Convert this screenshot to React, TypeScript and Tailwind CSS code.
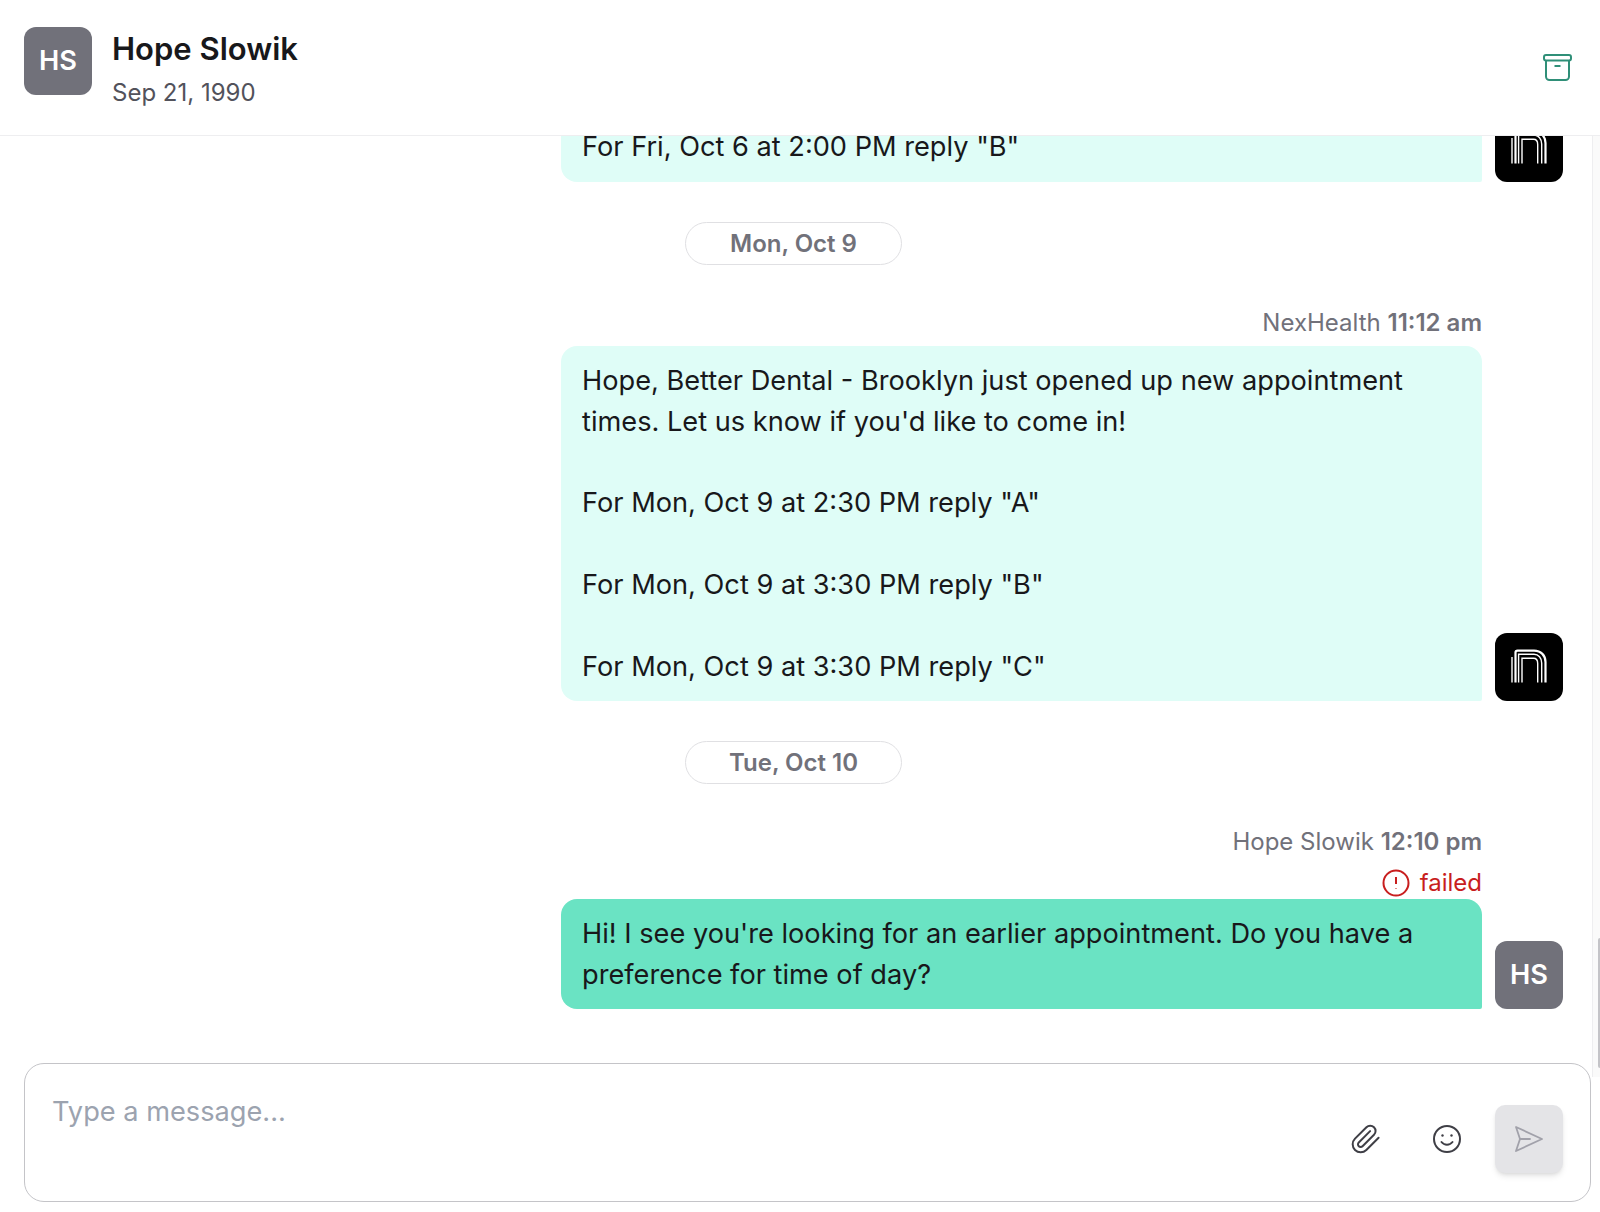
const font = { fontFamily: "Inter, 'Liberation Sans', sans-serif" };

function Avatar({ children }: { children: React.ReactNode }) {
  return (
    <div className="w-[68px] h-[68px] shrink-0 rounded-[12px] bg-[#71717a] text-white flex items-center justify-center text-[27.2px] font-semibold">
      {children}
    </div>
  );
}

function Logo() {
  return (
    <div className="w-[68px] h-[68px] shrink-0 rounded-[12px] bg-black flex items-center justify-center">
      <svg width="36" height="36" viewBox="0 0 36 36" fill="none" stroke="#fff" strokeWidth="1.4">
        <path d="M1 33.5V8" />
        <path d="M4.5 33.5V3.5Q4.5 1.6 6.5 1.6H23C30 1.6 34.5 6.5 34.5 13V33.5" strokeWidth="2.2" />
        <path d="M7.6 33.5V5.2H23C27.5 5.2 30.7 9 30.7 14V33.5" />
        <path d="M11 33.5V9.3H22.5C25 9.3 26.7 11.5 26.7 14.5V33.5" />
      </svg>
    </div>
  );
}

function DatePill({ children }: { children: React.ReactNode }) {
  return (
    <div className="pl-[685px] mt-[40px] mb-[40px]">
      <div className="w-[217px] h-[43px] rounded-full border border-[#e0e0e3] flex items-center justify-center text-[24px] font-semibold text-[#71717a]">
        {children}
      </div>
    </div>
  );
}

function Row({ bubble, avatar, children }: { bubble: string; avatar: React.ReactNode; children: React.ReactNode }) {
  return (
    <div className="flex items-end pl-[561px] pr-[37px] gap-[13px]">
      <div className={`w-[921px] rounded-tl-[16px] rounded-tr-[16px] rounded-bl-[16px] rounded-br-[2px] px-[21px] pt-[15px] text-[27.2px] leading-[40.8px] text-[#18181b] whitespace-pre-line ${bubble}`}>
        {children}
      </div>
      {avatar}
    </div>
  );
}

export default function App() {
  return (
    <div style={font} className="relative w-[1600px] h-[1212px] bg-white flex flex-col overflow-hidden">
      <header className="relative z-10 h-[136px] shrink-0 border-b border-[#eeeef0] flex items-start pl-[24px] pr-[28px] pt-[27px] bg-white">
        <Avatar>HS</Avatar>
        <div className="ml-[20px]">
          <div className="text-[31px] leading-[44px] font-semibold text-[#18181b]">Hope Slowik</div>
          <div className="text-[24px] leading-[36px] mt-[4px] text-[#52525b]">Sep 21, 1990</div>
        </div>
        <svg className="ml-auto mt-[27px]" width="29" height="27" viewBox="0 0 29 27" fill="none" stroke="#2f8f78" strokeWidth="2" strokeLinejoin="round">
          <rect x="1" y="1" width="27" height="5.5" rx="2" />
          <path d="M3 6.5V22.5a3.5 3.5 0 0 0 3.5 3.5H22.5a3.5 3.5 0 0 0 3.5-3.5V6.5" />
          <path d="M11.5 12H17.5" />
        </svg>
      </header>

      <main className="flex-1 min-h-0 overflow-hidden flex flex-col justify-end pb-[54px]">
        <div className="shrink-0 w-[1600px]">
          <Row bubble="bg-[#dffdf7] pb-[14px]" avatar={<Logo />}>{'For Fri, Oct 6 at 2:00 PM reply "B"'}</Row>
          <DatePill>Mon, Oct 9</DatePill>
          <div className="text-right pr-[118px] text-[24px] leading-[36px] text-[#71717a] mb-[5px]">
            NexHealth <span className="font-semibold">11:12 am</span>
          </div>
          <Row bubble="bg-[#dffdf7] pb-[14px]" avatar={<Logo />}>
            {'Hope, Better Dental - Brooklyn just opened up new appointment\ntimes. Let us know if you\'d like to come in!\n\nFor Mon, Oct 9 at 2:30 PM reply "A"\n\nFor Mon, Oct 9 at 3:30 PM reply "B"\n\nFor Mon, Oct 9 at 3:30 PM reply "C"'}
          </Row>
          <DatePill>Tue, Oct 10</DatePill>
          <div className="text-right pr-[118px] text-[24px] leading-[36px] text-[#71717a]">
            Hope Slowik <span className="font-semibold">12:10 pm</span>
          </div>
          <div className="flex justify-end items-center gap-[10px] pr-[118px] text-[24px] leading-[32px] text-[#c81e1e] mt-[7px]">
            <svg width="28" height="28" viewBox="0 0 28 28" fill="none" stroke="#c81e1e" strokeWidth="2">
              <circle cx="14" cy="14" r="12.5" />
              <path d="M14 8V15" />
              <path d="M14 19V19.5" />
            </svg>
            failed
          </div>
          <Row bubble="bg-[#6ae3c3] pb-[13px]" avatar={<Avatar>HS</Avatar>}>
            {"Hi! I see you're looking for an earlier appointment. Do you have a\npreference for time of day?"}
          </Row>
        </div>
      </main>

      <div className="shrink-0 h-[149px] pl-[24px] pr-[9px]">
        <div className="h-[139px] rounded-[20px] border border-[#c4c4c8] flex items-start pl-[27px] pr-[27px]">
          <div className="text-[27.2px] leading-[40px] mt-[28px] text-[#9ca3af]">Type a message...</div>
          <div className="ml-auto flex items-center mt-[41px]">
            <svg width="32" height="32" viewBox="0 0 24 24" fill="none" stroke="#3f3f46" strokeWidth="1.5" strokeLinecap="round" strokeLinejoin="round">
              <path d="M21.44 11.05l-9.19 9.19a6 6 0 0 1-8.49-8.49l8.57-8.57A4 4 0 1 1 18 8.84l-8.59 8.57a2 2 0 0 1-2.83-2.83l8.49-8.48" />
            </svg>
            <svg className="ml-[50px]" width="30" height="30" viewBox="0 0 30 30" fill="none" stroke="#3f3f46" strokeWidth="2" strokeLinecap="round">
              <circle cx="15" cy="15" r="13" />
              <path d="M9.5 18c2.8 3.6 8.2 3.6 11 0" />
              <circle cx="10.5" cy="11.5" r="1.2" fill="#3f3f46" stroke="none" />
              <circle cx="19.5" cy="11.5" r="1.2" fill="#3f3f46" stroke="none" />
            </svg>
            <button className="ml-[33px] w-[68px] h-[68px] rounded-[10px] bg-[#e4e4e7] shadow-md flex items-center justify-center">
              <svg width="30" height="30" viewBox="0 0 30 30" fill="none" stroke="#a1a1aa" strokeWidth="1.8" strokeLinejoin="round" strokeLinecap="round">
                <path d="M2 3L28 15L2 27L6 15Z" />
                <path d="M6 15H16" />
              </svg>
            </button>
          </div>
        </div>
      </div>

      <div className="absolute left-[1592px] top-[136px] w-[8px] h-[941px] border-l border-[#eeeef0] bg-[#fafafa]">
        <div className="absolute right-0 bottom-[9px] w-[2px] h-[130px] rounded-l-[2px] bg-[#c4c4c8]" />
      </div>
    </div>
  );
}
